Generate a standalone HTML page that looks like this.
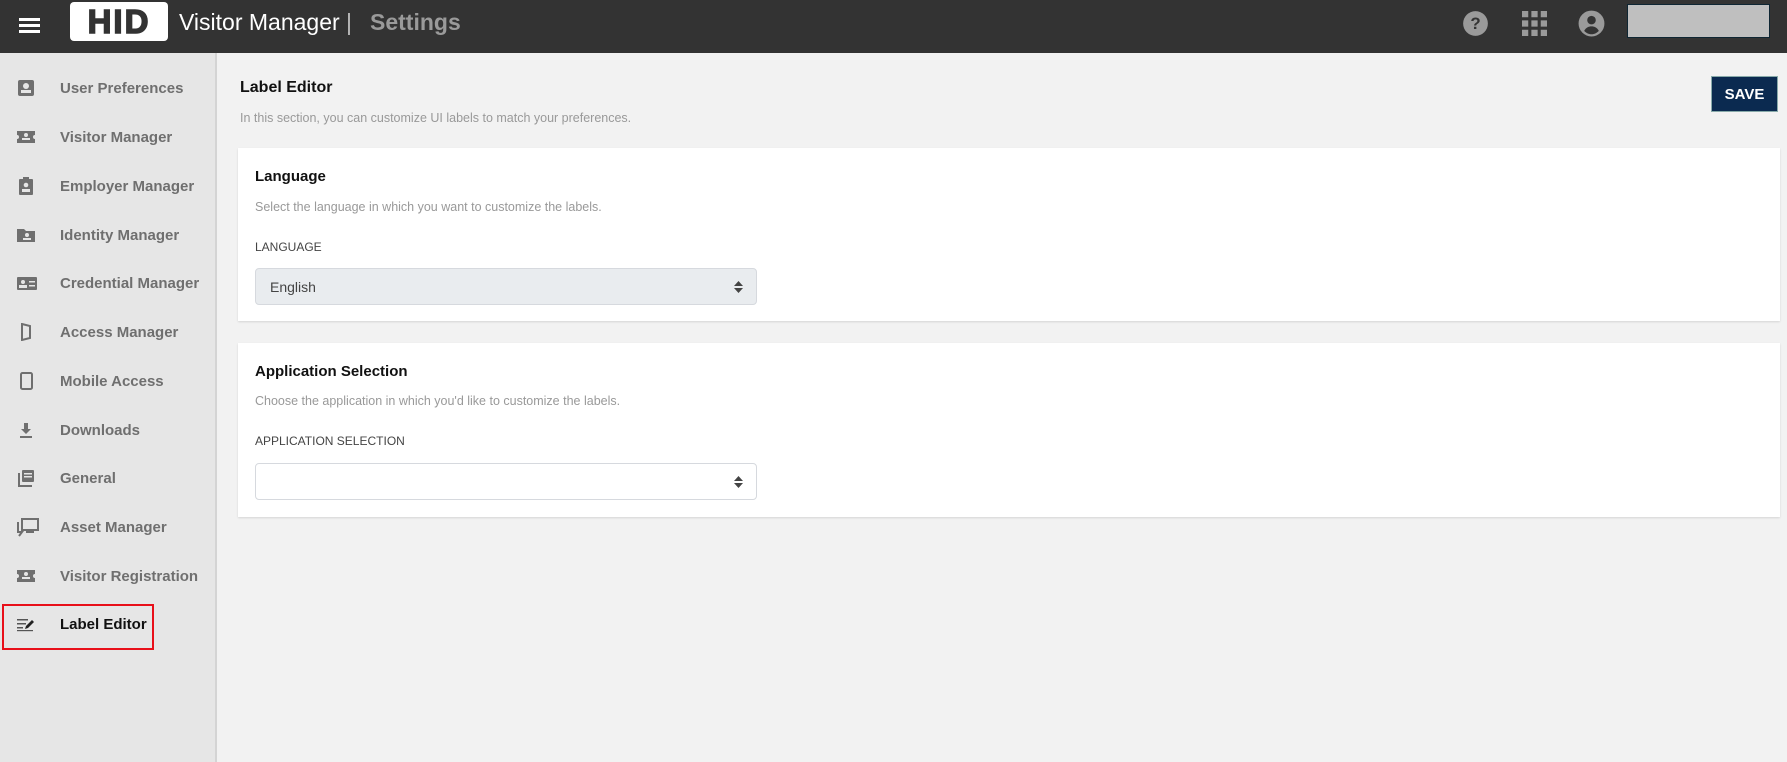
<!DOCTYPE html>
<html><head><meta charset="utf-8"><style>
*{box-sizing:border-box;margin:0;padding:0}
body{width:1787px;height:762px;overflow:hidden;background:#f2f2f2;font-family:"Liberation Sans",sans-serif;position:relative}
.hdr{position:absolute;left:0;top:0;width:1787px;height:53px;background:#333}
.side{position:absolute;left:0;top:53px;width:217px;height:709px;background:#e6e6e6;border-right:2px solid #d4d4d4}
.it{position:absolute;left:0;width:215px;height:40px;display:flex;align-items:center;font-size:15px;color:#6f6f6f;font-weight:bold}
.it svg{position:absolute;left:17px}
.it span{position:absolute;left:60px}
.card{position:absolute;left:238px;width:1542px;background:#fff;box-shadow:0 1px 2px rgba(0,0,0,.12)}
.ct{position:absolute;left:17px;font-size:15px;font-weight:bold;color:#111}
.cd{position:absolute;left:17px;font-size:12.5px;color:#999}
.cl{position:absolute;left:17px;font-size:12px;color:#444}
.sel{position:absolute;left:17px;width:502px;height:37px;border:1px solid #d6d9de;border-radius:4px}
.arr{position:absolute;right:13px;top:12px}
</style></head><body>
<div class="hdr">
<div style="position:absolute;left:19px;top:18px;width:21px;height:2.5px;background:#fff;box-shadow:0 6px 0 #fff,0 12px 0 #fff"></div>
<div style="position:absolute;left:70px;top:2px;width:98px;height:39px;background:#fff;border-radius:4px;display:flex;align-items:center;justify-content:center;font-weight:900;font-size:33px;color:#333;letter-spacing:2px;-webkit-text-stroke:1.5px #333;transform-origin:center">HID</div>
<div style="position:absolute;left:179px;top:9px;font-size:23px;color:#fff">Visitor Manager <span style="color:#bbb;font-weight:300">|</span></div>
<div style="position:absolute;left:370px;top:9px;font-size:23px;color:#9a9a9a;font-weight:bold">Settings</div>
<svg style="position:absolute;left:1462px;top:10px" width="27" height="27" viewBox="0 0 24 24"><circle cx="12" cy="12" r="11" fill="#9a9a9a"/><text x="12" y="17" text-anchor="middle" font-size="15" font-weight="bold" fill="#333" font-family="Liberation Sans">?</text></svg>
<svg style="position:absolute;left:1522px;top:11px" width="25" height="25" viewBox="0 0 24 24" fill="#9a9a9a"><rect x="0" y="0" width="6" height="6"/><rect x="9" y="0" width="6" height="6"/><rect x="18" y="0" width="6" height="6"/><rect x="0" y="9" width="6" height="6"/><rect x="9" y="9" width="6" height="6"/><rect x="18" y="9" width="6" height="6"/><rect x="0" y="18" width="6" height="6"/><rect x="9" y="18" width="6" height="6"/><rect x="18" y="18" width="6" height="6"/></svg>
<svg style="position:absolute;left:1578px;top:10px" width="27" height="27" viewBox="0 0 24 24"><circle cx="12" cy="12" r="11.5" fill="#9a9a9a"/><circle cx="12" cy="9" r="3.8" fill="#333"/><path d="M5.5 18.5c1.5-3 4-4 6.5-4s5 1 6.5 4c-1.7 1.8-4 3-6.5 3s-4.8-1.2-6.5-3z" fill="#333"/></svg>
<div style="position:absolute;left:1627px;top:4px;width:143px;height:34px;background:#bfbfbf;border:1px solid #0f2633"></div>
</div>
<div class="side">
<div class="it" style="top:15px"><svg width="18" height="18" viewBox="0 0 18 18"><rect x="1" y="1" width="16" height="16" rx="2" fill="#6f6f6f"/><circle cx="9" cy="7" r="3" fill="#e6e6e6"/><rect x="4" y="11" width="10" height="3" fill="#e6e6e6"/></svg><span>User Preferences</span></div>
<div class="it" style="top:64px"><svg width="18" height="18" viewBox="0 0 18 18"><path d="M0 3h18v4a2 2 0 0 0 0 4v4H0v-4a2 2 0 0 0 0-4z" fill="#6f6f6f"/><circle cx="9" cy="7" r="2" fill="#e6e6e6"/><rect x="5" y="10" width="8" height="2" fill="#e6e6e6"/></svg><span>Visitor Manager</span></div>
<div class="it" style="top:113px"><svg width="18" height="18" viewBox="0 0 18 18"><rect x="2" y="2" width="14" height="16" rx="1" fill="#6f6f6f"/><rect x="6" y="0" width="6" height="3" fill="#6f6f6f"/><circle cx="9" cy="8" r="2.3" fill="#e6e6e6"/><rect x="5" y="12" width="8" height="3" fill="#e6e6e6"/></svg><span>Employer Manager</span></div>
<div class="it" style="top:162px"><svg width="18" height="18" viewBox="0 0 18 18"><path d="M0 3h7l2 2h9v11H0z" fill="#6f6f6f"/><circle cx="10" cy="9" r="2" fill="#e6e6e6"/><rect x="6" y="12" width="8" height="2" fill="#e6e6e6"/></svg><span>Identity Manager</span></div>
<div class="it" style="top:210px"><svg width="20" height="18" viewBox="0 0 20 18"><rect x="0" y="3" width="20" height="13" rx="1" fill="#6f6f6f"/><circle cx="6" cy="8" r="2" fill="#e6e6e6"/><rect x="2" y="11" width="8" height="3" fill="#e6e6e6"/><rect x="12" y="7" width="6" height="1.5" fill="#e6e6e6"/><rect x="12" y="11" width="6" height="1.5" fill="#e6e6e6"/></svg><span>Credential Manager</span></div>
<div class="it" style="top:259px"><svg width="18" height="18" viewBox="0 0 18 18"><path d="M5 1l8 2v12l-8 2z" fill="none" stroke="#6f6f6f" stroke-width="2"/></svg><span>Access Manager</span></div>
<div class="it" style="top:308px"><svg width="18" height="18" viewBox="0 0 18 18"><rect x="4" y="1" width="11" height="16" rx="1.5" fill="none" stroke="#6f6f6f" stroke-width="2"/></svg><span>Mobile Access</span></div>
<div class="it" style="top:357px"><svg width="18" height="18" viewBox="0 0 18 18"><path d="M7 2h4v6h3l-5 5-5-5h3z M3 15h12v2H3z" fill="#6f6f6f"/></svg><span>Downloads</span></div>
<div class="it" style="top:405px"><svg width="18" height="18" viewBox="0 0 18 18"><rect x="5" y="1" width="12" height="12" rx="1" fill="#6f6f6f"/><rect x="7" y="4" width="8" height="1.5" fill="#e6e6e6"/><rect x="7" y="7" width="8" height="1.5" fill="#e6e6e6"/><path d="M2 4v13h13" fill="none" stroke="#6f6f6f" stroke-width="2"/></svg><span>General</span></div>
<div class="it" style="top:454px"><svg width="22" height="20" viewBox="0 0 22 20"><rect x="5" y="2" width="16" height="11" fill="none" stroke="#6f6f6f" stroke-width="2"/><path d="M1 5v10h4l-3 4" fill="none" stroke="#6f6f6f" stroke-width="2"/><rect x="9" y="14" width="8" height="2" fill="#6f6f6f"/></svg><span>Asset Manager</span></div>
<div class="it" style="top:503px"><svg width="18" height="18" viewBox="0 0 18 18"><path d="M0 3h18v4a2 2 0 0 0 0 4v4H0v-4a2 2 0 0 0 0-4z" fill="#6f6f6f"/><circle cx="9" cy="7" r="2" fill="#e6e6e6"/><rect x="5" y="10" width="8" height="2" fill="#e6e6e6"/></svg><span>Visitor Registration</span></div>
<div style="position:absolute;left:2px;top:551px;width:152px;height:46px;border:2px solid #e8101a"></div>
<div class="it" style="top:551px;color:#111"><svg width="18" height="18" viewBox="0 0 18 18"><rect x="0" y="4" width="11" height="1.5" fill="#555"/><rect x="0" y="8" width="9" height="1.5" fill="#555"/><rect x="0" y="12" width="6" height="1.5" fill="#555"/><path d="M8 14l1-3 6-6 2 2-6 6z" fill="#222"/><rect x="0" y="15" width="16" height="1.2" fill="#555"/></svg><span>Label Editor</span></div>
</div>
<div style="position:absolute;left:240px;top:79px;font-size:16px;font-weight:bold;color:#111">Label Editor</div>
<div style="position:absolute;left:240px;top:111px;font-size:12.5px;color:#999">In this section, you can customize UI labels to match your preferences.</div>
<div style="position:absolute;left:1711px;top:76px;width:67px;height:36px;background:#0b2a50;color:#fff;font-weight:bold;font-size:15px;display:flex;align-items:center;justify-content:center;border:1px solid #8aa">SAVE</div>
<div class="card" style="top:148px;height:173px">
<div class="ct" style="top:20px">Language</div>
<div class="cd" style="top:52px">Select the language in which you want to customize the labels.</div>
<div class="cl" style="top:92px">LANGUAGE</div>
<div class="sel" style="top:120px;background:#e9ecef"><span style="position:absolute;left:14px;top:10px;font-size:14px;color:#444">English</span><svg class="arr" width="9" height="12" viewBox="0 0 9 12"><path d="M0 5l4.5-5 4.5 5zM0 7l4.5 5 4.5-5z" fill="#444"/></svg></div>
</div>
<div class="card" style="top:343px;height:174px">
<div class="ct" style="top:20px">Application Selection</div>
<div class="cd" style="top:51px">Choose the application in which you'd like to customize the labels.</div>
<div class="cl" style="top:91px">APPLICATION SELECTION</div>
<div class="sel" style="top:120px;background:#fff"><svg class="arr" width="9" height="12" viewBox="0 0 9 12"><path d="M0 5l4.5-5 4.5 5zM0 7l4.5 5 4.5-5z" fill="#444"/></svg></div>
</div>
</body></html>
